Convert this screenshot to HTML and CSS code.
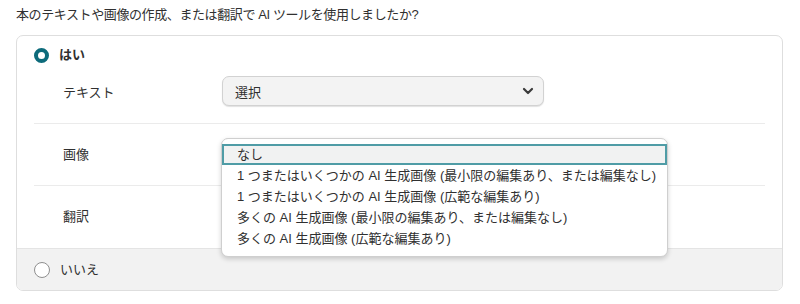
FILE: index.html
```html
<!DOCTYPE html>
<html lang="ja">
<head>
    <meta charset="UTF-8">
    <title>AI の使用</title>
    <link rel="stylesheet" href="styles.css">
</head>
<body>
    <p class="question">本のテキストや画像の作成、または翻訳で AI ツールを使用しましたか?</p>

    <div class="card">
        <!-- Yes option with detail rows -->
        <div class="choice choice-yes">
            <label class="choice-head">
                <span class="radio radio-on"></span>
                <span class="choice-text bold">はい</span>
            </label>

            <div class="detail-list">
                <div class="detail-row">
                    <span class="detail-label">テキスト</span>
                    <div class="select-wrap">
                        <div class="fake-select">
                            <span>選択</span>
                            <svg class="chevron" width="12" height="8" viewBox="0 0 12 8"><path d="M2 2 6 6l4-4" fill="none" stroke="#3a3a3a" stroke-width="2.2" stroke-linecap="round" stroke-linejoin="round"/></svg>
                        </div>
                    </div>
                </div>

                <div class="detail-row">
                    <span class="detail-label">画像</span>
                    <div class="select-wrap">
                        <!-- the closed box sits under the open list -->
                        <div class="fake-select"></div>
                        <ul class="option-list">
                            <li class="option active">なし</li>
                            <li class="option">1 つまたはいくつかの AI 生成画像 (最小限の編集あり、または編集なし)</li>
                            <li class="option">1 つまたはいくつかの AI 生成画像 (広範な編集あり)</li>
                            <li class="option">多くの AI 生成画像 (最小限の編集あり、または編集なし)</li>
                            <li class="option">多くの AI 生成画像 (広範な編集あり)</li>
                        </ul>
                    </div>
                </div>

                <div class="detail-row">
                    <span class="detail-label">翻訳</span>
                    <div class="select-wrap">
                        <div class="fake-select"></div>
                    </div>
                </div>
            </div>
        </div>

        <!-- No option -->
        <label class="choice choice-no">
            <span class="radio radio-big"></span>
            <span class="choice-text">いいえ</span>
        </label>
    </div>
</body>
</html>
```

FILE: styles.css
```css
* {
    margin: 0;
    padding: 0;
    box-sizing: border-box;
}

body {
    font-family: "Liberation Sans", "Noto Sans CJK JP", sans-serif;
    font-size: 13px;
    color: #303030;
    background-color: #fff;
    padding: 6px 17px 0 16px;
}

.question {
    line-height: 18px;
    margin-bottom: 11px;
    letter-spacing: -0.4px;
}

/* Card */
.card {
    border: 1px solid #dedede;
    border-radius: 7px;
}

.choice-yes {
    padding: 12px 17px 1px 17px;
}

.choice-head {
    display: flex;
    align-items: center;
    height: 14px;
}

.choice-text {
    margin-left: 10px;
    line-height: 14px;
}

.bold {
    font-weight: bold;
}

/* Radio buttons */
.radio {
    width: 15px;
    height: 15px;
    border-radius: 50%;
    border: 1px solid #8a8a8a;
    background-color: #fff;
    flex-shrink: 0;
}

.radio-on {
    border: 4px solid #0d6b7b;
}

.radio-big {
    width: 16px;
    height: 16px;
    border-color: #8f8f8f;
}

/* Detail rows */
.detail-row {
    display: flex;
    align-items: center;
    padding: 14px 0 17px 0;
    border-bottom: 1px solid #ebebeb;
}

.detail-row:last-child {
    border-bottom: none;
}

.detail-label {
    width: 188px;
    padding-left: 29px;
    flex-shrink: 0;
}

.select-wrap {
    position: relative;
}

.fake-select {
    width: 322px;
    height: 30px;
    display: flex;
    align-items: center;
    justify-content: space-between;
    padding: 0 9px 0 12px;
    background-color: #f3f3f3;
    border: 1px solid #d2d2d2;
    border-radius: 7px;
    box-shadow: 0 1px 1px rgba(0, 0, 0, 0.12);
}

/* Open dropdown */
.option-list {
    position: absolute;
    top: 0;
    left: -1px;
    width: 447px;
    list-style: none;
    background-color: #fff;
    border: 1px solid #cfcfcf;
    border-radius: 7px;
    padding: 5px 0 7px 0;
    box-shadow: 0 2px 5px rgba(0, 0, 0, 0.18);
    z-index: 5;
}

.option {
    height: 21px;
    line-height: 21px;
    padding-left: 15px;
    white-space: nowrap;
}

.option.active {
    background-color: #f1f2f2;
    border: 2px solid #4f9ca6;
    line-height: 17px;
    padding-left: 13px;
}

/* No option */
.choice-no {
    display: flex;
    align-items: center;
    height: 42px;
    padding-left: 17px;
    background-color: #f2f2f2;
    border-top: 1px solid #e4e4e4;
    border-radius: 0 0 6px 6px;
}
```
